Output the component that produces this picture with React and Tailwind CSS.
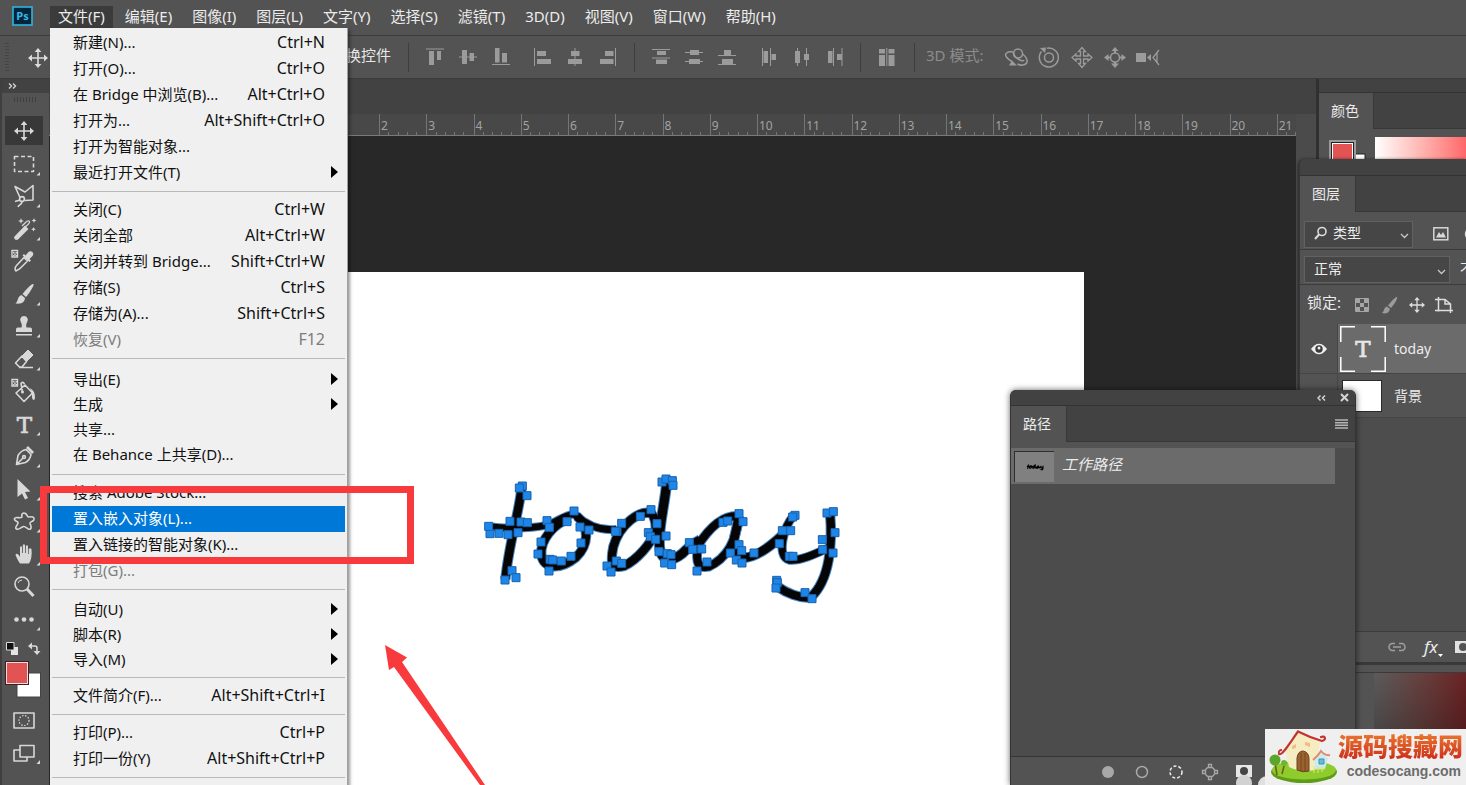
const menus = ['文件(F)', '编辑(E)', '图像(I)', '图层(L)', '文字(Y)', '选择(S)', '滤镜(T)', '3D(D)', '视图(V)', '窗口(W)', '帮助(H)'];

const fileMenu = [
  {
    row: 'h-[26px]',
    pad: '',
    items: [
      { label: '新建(N)...', keys: 'Ctrl+N' },
      { label: '打开(O)...', keys: 'Ctrl+O' },
      { label: '在 Bridge 中浏览(B)...', keys: 'Alt+Ctrl+O' },
      { label: '打开为...', keys: 'Alt+Shift+Ctrl+O' },
      { label: '打开为智能对象...' },
      { label: '最近打开文件(T)', sub: true },
    ],
  },
  {
    row: 'h-[26px]',
    pad: '',
    items: [
      { label: '关闭(C)', keys: 'Ctrl+W' },
      { label: '关闭全部', keys: 'Alt+Ctrl+W' },
      { label: '关闭并转到 Bridge...', keys: 'Shift+Ctrl+W' },
      { label: '存储(S)', keys: 'Ctrl+S' },
      { label: '存储为(A)...', keys: 'Shift+Ctrl+S' },
      { label: '恢复(V)', keys: 'F12', disabled: true },
    ],
  },
  {
    row: 'h-[25px]',
    pad: 'pt-[3px] pb-0.5',
    items: [
      { label: '导出(E)', sub: true },
      { label: '生成', sub: true },
      { label: '共享...' },
      { label: '在 Behance 上共享(D)...' },
    ],
  },
  {
    row: 'h-[26px]',
    pad: '',
    items: [
      { label: '搜索 Adobe Stock...' },
      { label: '置入嵌入对象(L)...', active: true },
      { label: '置入链接的智能对象(K)...' },
      { label: '打包(G)...', disabled: true },
    ],
  },
  {
    row: 'h-[25px]',
    pad: 'pt-0.5',
    items: [
      { label: '自动(U)', sub: true },
      { label: '脚本(R)', sub: true },
      { label: '导入(M)', sub: true },
    ],
  },
  { row: 'h-[26px]', pad: '', items: [{ label: '文件简介(F)...', keys: 'Alt+Shift+Ctrl+I' }] },
  {
    row: 'h-[26px]',
    pad: '',
    items: [
      { label: '打印(P)...', keys: 'Ctrl+P' },
      { label: '打印一份(Y)', keys: 'Alt+Shift+Ctrl+P' },
    ],
  },
];

function MenuItem({ item, row }) {
  const tone = item.active ? 'bg-[#0078d7] text-white' : item.disabled ? 'text-[#7c7c7c]' : 'text-[#111111]';
  return (
    <button type="button" role="menuitem" disabled={item.disabled} className={`flex w-full items-center pb-0.5 pl-[21px] pr-[7px] text-left ${row} ${tone}`}>
      <span className="flex-1 whitespace-nowrap">{item.label}</span>
      <span className="whitespace-nowrap text-[16px]">{item.keys}</span>
      <svg className="ml-1.5 h-3 w-[7px]" viewBox="0 0 7 12">
        {item.sub && <path d="M0 0L7 6L0 12Z" fill="#000" />}
      </svg>
    </button>
  );
}

function FileMenu() {
  return (
    <div role="menu" className="absolute left-0 top-full z-30 h-[760px] w-[298px] border-r border-[#a0a0a0] bg-[#f0f0f0] px-0.5 pt-0.5 text-[15px] leading-5 shadow-[2px_2px_3px_rgba(0,0,0,0.4)]">
      {fileMenu.map((group, i) => (
        <div key={i}>
          <div className={group.pad}>
            {group.items.map((item) => (
              <MenuItem key={item.label} item={item} row={group.row} />
            ))}
          </div>
          <div className="my-[5px] h-px bg-[#b9b9b9]" />
        </div>
      ))}
    </div>
  );
}

function MoveShape({ x, y }) {
  return (
    <g transform={`translate(${x} ${y})`}>
      <path d="M-8 0H8M0 -8V8" stroke="currentColor" strokeWidth="1.6" fill="none" />
      <path d="M0 -10L3.4 -6H-3.4ZM0 10L3.4 6H-3.4ZM-10 0L-6 -3.4V3.4ZM10 0L6 -3.4V3.4Z" fill="currentColor" />
    </g>
  );
}

function Checker({ y }) {
  return (
    <g transform={`translate(0 ${y})`}>
      <path d="M12 1.500H17.500V8H12Z" fill="none" stroke="currentColor" strokeWidth="1.400" />
      <path d="M13 3h1.500v1.500H13zM15.500 3H17v1.500h-1.500zM14.200 4.700h1.500v1.500h-1.500zM13 6h1.500v1.200H13zM15.500 6H17v1.200h-1.500z" fill="currentColor" />
    </g>
  );
}

const line = { fill: 'none', stroke: 'currentColor', strokeWidth: 1.6, strokeLinejoin: 'round' };

// every tool is drawn on a 48x32 cell
const tools = [
  { name: '移动', active: true, art: <MoveShape x={24} y={16} /> },
  { name: '矩形选框', corner: true, art: <rect x="14.500" y="8.500" width="19" height="15" {...line} strokeDasharray="4 2.500" /> },
  {
    name: '多边形套索',
    corner: true,
    art: (
      <g {...line}>
        <path d="M20 17.500L15 6.500L25 12L33 5.500V20L25 20.500" />
        <circle cx="22" cy="19" r="2.400" />
        <path d="M20 20L15 21.500M22 21.500C22 25 19 24 18 27" />
      </g>
    ),
  },
  {
    name: '魔棒',
    corner: true,
    art: (
      <g fill="currentColor">
        <path d="M14.500 23.500L25 12.500L28.500 16L18 26.500C16 28 13 25.500 14.500 23.500Z" />
        <path d="M24.500 14.500L28 11.500Q30.500 9 29 8Q27.500 7.500 25.500 9.500L22 13" fill="none" stroke="currentColor" strokeWidth="1.300" />
        <path d="M21 5l.8 2.200 2.200.8-2.200.8-.8 2.200-.8-2.200-2.200-.8 2.200-.8zM34 5l.7 1.800 1.800.7-1.800.7-.7 1.800-.7-1.800-1.800-.7 1.800-.7zM33.500 14l.7 1.600 1.600.7-1.600.7-.7 1.600-.7-1.600-1.600-.7 1.600-.7z" />
      </g>
    ),
  },
  {
    name: '吸管',
    art: (
      <g>
        <Checker y={4} />
        <path d="M16 26C14.500 25 15 22 16.500 20.500L24 12.500L27.500 16L20 23.500C18.500 25 17.500 24.500 16 26Z" {...line} />
        <path d="M22.500 10.500L24 9L25.500 10.500L28.500 7C31 4.500 35 8 32.500 11L29.500 14L31 15.500L29.500 17Z" fill="currentColor" />
      </g>
    ),
  },
  {
    name: '画笔',
    corner: true,
    art: <path d="M33.500 6C34.500 7.500 28 17 26 19L22.500 16C24.500 13.500 31.500 5 33.500 6ZM21.500 17L25 20C24.500 25.500 20 26 15.500 25.500C18.500 23.500 17 18.500 21.500 17Z" fill="currentColor" />,
  },
  {
    name: '仿制图章',
    corner: true,
    art: <path d="M24 6A4 4 0 0 1 27 12.500C26 14 26 16 26.500 17.500H30Q32 17.500 32 19.500V22H16V19.500Q16 17.500 18 17.500H21.500C22 16 22 14 21 12.500A4 4 0 0 1 24 6ZM16 24H32V25.500H16Z" fill="currentColor" />,
  },
  {
    name: '橡皮擦',
    corner: true,
    art: (
      <g>
        <path d="M22 13L28 7L33 12L26.500 18.500Z" fill="currentColor" stroke="currentColor" />
        <path d="M22 13L15.500 20L19.500 24H22L26.500 18.500ZM19 24.500H33" {...line} />
      </g>
    ),
  },
  {
    name: '油漆桶',
    art: (
      <g>
        <Checker y={3} />
        <path d="M16 18L25 10L32.500 18L24 26.500ZM22.500 17L21 8.500Q22.500 6 24.500 9" {...line} />
        <circle cx="22.500" cy="17" r="1.500" fill="currentColor" />
        <path d="M30 13Q35 16 35 22Q35 25 33.500 25Q32 24.500 32 22Q32.500 17 30 13Z" fill="currentColor" />
      </g>
    ),
  },
  {
    name: '文字',
    corner: true,
    art: (
      <text x="24.500" y="24.500" textAnchor="middle" fontFamily="DejaVu Serif, serif" fontSize="23" fill="currentColor" stroke="currentColor" strokeWidth=".7">
        T
      </text>
    ),
  },
  {
    name: '钢笔',
    corner: true,
    art: (
      <g {...line}>
        <path d="M16.500 24.500L18 15.500Q21 10.500 26 9.500L31 14.500Q30 20 25.500 22.500ZM17 24L23 18" />
        <path d="M27 7L33 13" strokeWidth="2.800" />
        <circle cx="24" cy="17" r="1.400" />
      </g>
    ),
  },
  { name: '路径选择', corner: true, art: <path d="M17.500 6L30.500 18.500L25 19L28 25L25 26.500L22 20.500L17.500 24Z" fill="currentColor" /> },
  {
    name: '自定形状',
    corner: true,
    art: <path d="M22 12C21 9 23 7 25.500 8.500C27.500 10 27 12 29 12C32 11.500 34.500 11.500 34 14.500C33.500 17 29.500 16 30 18.500C31 21 32 22.500 30.500 24C28 25.500 26 21 23.500 21.500C21 22 19 25.500 16.500 24C14 22.500 18.500 19.500 18 17.500C17.500 16 14 16.500 14.500 13.500C15.500 11 20 14 22 12Z" {...line} />,
  },
  {
    name: '抓手',
    corner: true,
    art: <path d="M20 25.500C18 22.500 16 19 15.500 16.500C16.500 15 18.500 16 20 19V9Q21 7.500 22 9V15H22.800V7Q24 5.500 25 7V15H25.800V8Q27 6.500 28 8V16H28.700V11Q30 9.500 31.500 11C32 17 31.500 22 29 25.500Z" fill="currentColor" />,
  },
  {
    name: '缩放',
    art: (
      <g {...line}>
        <circle cx="22" cy="14" r="7" />
        <path d="M27 19L33.500 26" strokeWidth="3" />
        <path d="M18 13Q19 10 22 10" strokeWidth="1" />
      </g>
    ),
  },
  {
    name: '编辑工具栏',
    corner: true,
    art: (
      <g fill="currentColor">
        <circle cx="16.500" cy="16.500" r="2.300" />
        <circle cx="24" cy="16.500" r="2.300" />
        <circle cx="31.500" cy="16.500" r="2.300" />
      </g>
    ),
  },
];

function Toolbox() {
  return (
    <aside className="flex w-[49px] shrink-0 flex-col border-l-2 border-[#3f3f3f] bg-[#535353] text-[#d8d8d8]">
      <div className="flex h-3.5 items-center bg-[#424242] pl-1.5">
        <svg width="10" height="8" viewBox="0 0 10 8" fill="none" stroke="#d0d0d0" strokeWidth="1.400">
          <path d="M1 1.500L3.500 4L1 6.500M5 1.500L7.500 4L5 6.500" />
        </svg>
      </div>
      <div className="mx-auto mt-1 h-[5px] w-6 bg-[repeating-linear-gradient(90deg,#404040_0_1px,transparent_1px_3px)]" />
      <div className="-ml-0.5 mt-[13px] flex h-[520px] flex-col">
        {tools.map((tool) => (
          <button key={tool.name} type="button" aria-label={tool.name} className="min-h-0 flex-1">
            <svg width="48" height="32" viewBox="0 0 48 32">
              {tool.active && <rect x="5" y="1" width="38" height="29" fill="#383838" />}
              {tool.art}
              {tool.corner && <path d="M40 24V27.500H36.500Z" fill="currentColor" />}
            </svg>
          </button>
        ))}
      </div>
      <svg className="-ml-0.5" width="48" height="136" viewBox="0 635 48 136">
        <path d="M11 647H18V655H11Z" fill="#e4e4e4" />
        <path d="M6.500 642.500H14V650H6.500Z" fill="#111" stroke="#ddd" />
        <path d="M30 646H35Q37 646 37 648V653" {...line} />
        <path d="M32 642.500V649.500L28 646ZM33.500 651H40.500L37 655Z" fill="currentColor" />
        <rect x="17" y="673" width="23.500" height="24" fill="#fff" stroke="#444" />
        <rect x="5" y="661" width="24" height="24" fill="#3d2020" />
        <rect x="6.500" y="662.500" width="21" height="21" fill="#e25354" stroke="#f5dcdc" />
        <path d="M14 713H34V728H14Z" {...line} />
        <circle cx="24" cy="720.500" r="5" {...line} strokeWidth="1.200" strokeDasharray="1.500 1.500" />
        <path d="M20 745.500H34V757H20ZM20 750H14V761H27V757" {...line} />
        <path d="M40 760V764H36.500Z" fill="currentColor" />
      </svg>
    </aside>
  );
}

const alignIcons = [
  [
    { name: '顶对齐', d: 'M3 3.500H21V4.500H3ZM6 6H11V20H6ZM14 6H18V15H14Z' },
    { name: '垂直居中对齐', d: 'M3 11.500H21V12.500H3ZM6 5H11V19H6ZM13.500 8H18V16H13.500Z' },
    { name: '底对齐', d: 'M3 19H21V20H3ZM6 3H10.500V17.500H6ZM13 8H18V17.500H13Z' },
  ],
  [
    { name: '左对齐', d: 'M4 3H5V21H4ZM7 6H16V11H7ZM7 14H21V19H7Z' },
    { name: '水平居中对齐', d: 'M11.500 3H12.500V21H11.500ZM8 6H16.500V11H8ZM5 14H19V19H5Z' },
    { name: '右对齐', d: 'M19 3H20V21H19ZM9 6H17.500V11H9ZM4 14H17.500V19H4Z' },
  ],
];

const distributeIcons = [
  [
    { name: '按顶分布', d: 'M3 4H21V5H3ZM8 6H17V10H8ZM3 12.500H21V13.500H3ZM7 14.500H18V19H7Z' },
    { name: '垂直居中分布', d: 'M3 7H21V8H3ZM8 5H17V10H8ZM3 16H21V17H3ZM7 14H18V19H7Z' },
    { name: '按底分布', d: 'M3 10H21V11H3ZM9 5H16V10H9ZM3 19H21V20H3ZM7 14H18V19H7Z' },
  ],
  [
    { name: '按左分布', d: 'M5 3H6V21H5ZM6.500 6H11V18H6.500ZM13 3H14V21H13ZM14.500 9H19V15H14.500Z' },
    { name: '水平居中分布', d: 'M7 3H8V21H7ZM5 6H10V18H5ZM16 3H17V21H16ZM14 9H19V15H14Z' },
    { name: '按右分布', d: 'M10 3H11V21H10ZM5 6H9.500V18H5ZM18.500 3H19.500V21H18.500ZM14 9H18.500V15H14Z' },
  ],
];

function BarIcon({ name, d, children }) {
  return (
    <button type="button" aria-label={name} className="flex w-[33px] justify-center">
      <svg width="24" height="24" viewBox="0 0 24 24" fill="currentColor">
        {d && <path d={d} />}
        {children}
      </svg>
    </button>
  );
}

function Divider() {
  return <div className="h-[29px] w-px bg-[#3e3e3e]" />;
}

function OptionsBar() {
  return (
    <div className="flex h-11 shrink-0 items-center border-b border-[#3a3a3a] border-t border-t-[#3c3c3c] bg-[#535353] text-[#9b9b9b]">
      <div className="flex w-[391px] shrink-0 items-center pl-[5px]">
        <div className="h-7 w-1 bg-[repeating-linear-gradient(#454545_0_1px,transparent_1px_3px)]" />
        <svg className="ml-4 text-[#dcdcdc]" width="24" height="24" viewBox="0 0 24 24">
          <MoveShape x={13} y={13} />
        </svg>
        <span className="ml-auto pb-1 text-[15px] leading-5 text-[#e6e6e6]">换控件</span>
      </div>
      <div className="ml-[17px] mr-[9px]">
        <Divider />
      </div>
      <div className="flex gap-2">
        {alignIcons.map((group, i) => (
          <div key={i} className="flex">
            {group.map((icon) => (
              <BarIcon key={icon.name} {...icon} />
            ))}
          </div>
        ))}
      </div>
      <div className="ml-2.5 mr-[9px]">
        <Divider />
      </div>
      <div className="flex gap-[9px]">
        {distributeIcons.map((group, i) => (
          <div key={i} className="flex">
            {group.map((icon) => (
              <BarIcon key={icon.name} {...icon} />
            ))}
          </div>
        ))}
      </div>
      <div className="mx-[9px]">
        <Divider />
      </div>
      <BarIcon name="自动对齐" d="M4 4H10V8.500H4ZM13.500 4H19.500V8.500H13.500ZM4 10H10V21H4ZM13.500 10H19.500V21H13.500ZM11.300 3H12.300V21H11.300Z" />
      <div className="mx-[11px]">
        <Divider />
      </div>
      <span className="w-[73px] whitespace-nowrap pb-1 text-[15px] leading-5 text-[#8c8c8c]">3D 模式:</span>
      <BarIcon name="环绕移动 3D 相机">
        <g fill="none" stroke="currentColor" strokeWidth="1.500">
          <path d="M9 7C3 6 0 9 2.500 12Q4.500 15 8 16.500M9.500 7Q9.500 11 14 14Q19 17 20 15M18.500 9C24 13 25 19 19 20Q16 20.500 13.500 19" />
          <circle cx="14" cy="8.500" r="4.500" />
        </g>
        <path d="M5 20.500L8 15.500L13 20.500Z" />
      </BarIcon>
      <BarIcon name="滚动 3D 相机">
        <g fill="none" stroke="currentColor" strokeWidth="1.500">
          <path d="M4.500 6.500A9.500 9.500 0 1 0 10 3.200" />
          <circle cx="12" cy="12.500" r="4.500" />
        </g>
        <path d="M3 3L9 2.500L8 8Z" />
      </BarIcon>
      <BarIcon name="平移 3D 相机">
        <path d="M12 2.500L15.500 6.500H13.500V11H18V9L22 12.500L18 16V14H13.500V18.500H15.500L12 22.500L8.500 18.500H10.500V14H6V16L2 12.500L6 9V11H10.500V6.500H8.500Z" fill="none" stroke="currentColor" strokeWidth="1.300" />
      </BarIcon>
      <BarIcon name="滑动 3D 相机">
        <path d="M12 2L15.500 6H8.500ZM12 23L16 18.500H8ZM1 12.500L5.500 9V16ZM23 12.500L18.500 9V16Z" />
        <path d="M11 5h2v3h-2zM11 17h2v3h-2zM4 11.500h4v2H4zM16 11.500h4v2h-4z" />
        <circle cx="12" cy="12.500" r="4.500" fill="none" stroke="currentColor" strokeWidth="1.500" />
      </BarIcon>
      <BarIcon name="变焦 3D 相机">
        <path d="M0 8H10V17H0ZM11 12.500L15 9V16Z" />
        <path d="M23 5L17 12.500L23 20M21 8V17" fill="none" stroke="currentColor" strokeWidth="1.300" />
      </BarIcon>
    </div>
  );
}

const rulerMarks = Array.from({ length: 20 }, (_, i) => i + 2);

function Ruler() {
  return (
    <div className="flex h-[22px] overflow-hidden border-b border-[#7a7a7a] bg-[#484848] text-[12px] leading-4 text-[#a2a2a2]">
      <div className="ml-[330px] grid w-[945px] shrink-0 grid-cols-20">
        {rulerMarks.map((n) => (
          <div key={n} className="flex flex-col justify-between border-l border-[#757575]">
            <span className="h-[17px] pl-px pt-1">{n}</span>
            <div className="grid h-[3px] grid-cols-5">
              <i className="border-r border-[#757575]" />
              <i className="border-r border-[#757575]" />
              <i className="border-r border-[#757575]" />
              <i className="border-r border-[#757575]" />
            </div>
          </div>
        ))}
      </div>
    </div>
  );
}

const strokes = [
  { d: 'M155 78C150 150 118 240 106 358', w: 25 },
  { d: 'M56 200C110 206 180 206 230 196C262 186 280 166 312 162', w: 20 },
  { d: 'M312 162C350 196 390 214 440 208', w: 20 },
  { d: 'M300 174C250 192 210 240 214 285C222 328 270 330 318 292C356 256 360 200 320 168', w: 25 },
  { d: 'M544 160C510 150 450 190 430 260C418 320 430 326 462 318C500 300 545 250 556 214C560 190 552 168 544 160', w: 25 },
  { d: 'M590 68C584 140 560 220 570 270C582 314 620 300 650 268Q668 250 690 240', w: 27 },
  { d: 'M806 168C760 164 720 200 684 256C676 310 684 326 716 320C770 296 800 240 806 168', w: 24 },
  { d: 'M806 168C802 220 770 270 812 292C850 300 900 260 935 228', w: 26 },
  { d: 'M972 166C940 200 918 290 958 300C990 304 1040 280 1070 266', w: 22 },
  { d: 'M1080 158C1088 250 1080 360 1022 412C990 416 950 400 920 378', w: 25 },
];

const anchors = [
  [157, 78], [148, 84], [171, 107], [120, 184], [153, 186], [172, 188], [144, 218], [114, 224], [87, 220], [60, 221], [56, 199],
  [126, 332], [138, 353], [105, 360], [231, 182], [238, 202], [291, 185], [312, 153], [330, 201], [357, 210], [213, 246], [204, 282],
  [240, 298], [248, 300], [274, 303], [303, 289], [333, 249], [237, 333], [455, 190], [441, 214], [436, 214], [511, 169], [543, 149],
  [439, 303], [411, 318], [455, 310], [423, 336], [576, 66], [588, 57], [607, 62], [609, 76], [561, 191], [535, 218], [541, 230],
  [557, 238], [588, 228], [567, 275], [584, 309], [592, 281], [603, 284], [605, 314], [658, 248], [668, 268], [695, 267], [711, 306],
  [681, 333], [759, 187], [773, 183], [807, 161], [819, 185], [807, 254], [781, 279], [815, 272], [799, 300], [816, 309], [852, 279],
  [975, 166], [968, 171], [937, 212], [962, 212], [928, 251], [958, 289], [969, 289], [1071, 159], [1090, 155], [1095, 218], [1057, 239],
  [1058, 269], [1089, 279], [920, 361], [922, 368], [918, 384], [1005, 398], [1026, 416],
];

function Lettering() {
  return (
    <svg role="img" aria-label="today" width="380" height="160" viewBox="0 0 1140 480" fill="none" strokeLinejoin="round">
      {strokes.map((s) => (
        <path key={s.d} d={s.d} stroke="#4a86c2" strokeWidth={s.w + 6} />
      ))}
      {strokes.map((s) => (
        <path key={s.d} d={s.d} stroke="#050505" strokeWidth={s.w} />
      ))}
      {anchors.map(([x, y]) => (
        <rect key={`${x}-${y}`} x={x - 12} y={y - 12} width="24" height="24" fill="#1e86e8" stroke="#1a63ac" strokeWidth="3" />
      ))}
    </svg>
  );
}

function Workspace() {
  return (
    <main className="flex min-w-0 flex-1 flex-col bg-[#4b4b4b]">
      <div className="h-[35px] shrink-0 bg-[#424242]" />
      <div className="flex min-h-0 flex-1">
        <div className="flex min-w-0 flex-1 flex-col">
          <Ruler />
          <div className="flex min-h-0 flex-1 bg-[#282828] pt-[136px] pl-[186px] pr-[212px]">
            <div className="flex flex-1 justify-center bg-white pt-[188px]">
              <Lettering />
            </div>
          </div>
        </div>
        <div className="w-5 shrink-0" />
      </div>
    </main>
  );
}

function PanelTab({ children, width, extra }) {
  return (
    <div className="flex h-9 shrink-0 bg-[#424242]">
      <div className={`flex items-center bg-[#535353] pl-3 text-[14px] leading-5 text-[#ececec] ${width}`}>{children}</div>
      <div className="flex flex-1 items-center justify-end border-b border-l border-[#383838]">{extra}</div>
    </div>
  );
}

function ColorPanel() {
  return (
    <aside className="flex w-[150px] shrink-0 flex-col border-l-3 border-[#303030] bg-[#535353]">
      <div className="h-3.5 shrink-0 border-b border-[#333333] bg-[#424242]" />
      <PanelTab width="w-[54px]">颜色</PanelTab>
      <div className="flex pt-2">
        <svg className="ml-2.5 mt-[3px] w-[46px] shrink-0" height="30" viewBox="0 0 46 30">
          <rect x="14" y="14" width="22" height="16" fill="#fff" stroke="#222" />
          <rect width="27" height="30" fill="#9b9b9b" />
          <rect x="2.500" y="2.500" width="22" height="28" fill="#e25354" stroke="#222" />
          <rect x="3.500" y="3.500" width="20" height="26" fill="none" stroke="#fff" />
        </svg>
        <div className="h-8 flex-1 bg-linear-to-r from-white to-[#ff6669]" />
      </div>
    </aside>
  );
}

function Select({ label, options, width, icon }) {
  return (
    <label className={`relative block h-[27px] shrink-0 ${width}`}>
      <span className="sr-only">{label}</span>
      <select className={`h-full w-full appearance-none border border-[#616161] bg-[#464646] pb-0.5 text-[14px] leading-5 text-[#ededed] ${icon ? 'pl-7' : 'pl-[9px]'}`}>
        {options.map((o) => (
          <option key={o}>{o}</option>
        ))}
      </select>
      {icon}
      <svg className="absolute bottom-2 right-1" width="9" height="6" viewBox="0 0 9 6" fill="none" stroke="#c8c8c8" strokeWidth="1.300">
        <path d="M1 1L4.500 4.500L8 1" />
      </svg>
    </label>
  );
}

function LayersPanel() {
  return (
    <section className="absolute right-0 top-20 z-10 flex h-full w-[167px] flex-col overflow-hidden rounded-tl-md border-l border-[#383838] bg-[#4d4d4d] text-[#ececec] shadow-[-1px_0_3px_rgba(0,0,0,0.5)]">
      <div className="h-[17px] shrink-0 border-b border-[#333333] bg-[#424242]" />
      <PanelTab width="w-[55px]">图层</PanelTab>
      <div className="flex h-[38px] shrink-0 items-center border-b border-[#3c3c3c] bg-[#535353] pl-1 pt-1.5">
        <Select
          label="滤镜类型"
          options={['类型']}
          width="w-[109px]"
          icon={
            <svg className="absolute left-2.5 top-1.5" width="14" height="14" viewBox="0 0 14 14" fill="none" stroke="#dcdcdc" strokeWidth="1.600">
              <circle cx="8" cy="5.500" r="4" />
              <path d="M5 8.500L1 13" strokeWidth="2" />
            </svg>
          }
        />
        <svg className="ml-5 shrink-0" width="32" height="16" viewBox="0 0 32 16">
          <rect x=".8" y="1.800" width="14" height="12" fill="none" stroke="#d8d8d8" strokeWidth="1.500" />
          <path d="M3 11.500L6 6L8 9L10 6L13 11.500Z" fill="#d8d8d8" />
        </svg>
        <svg className="-ml-px shrink-0" width="14" height="14" viewBox="0 0 14 14" fill="none" stroke="#d8d8d8" strokeWidth="1.500">
          <circle cx="7" cy="7" r="5.500" />
        </svg>
      </div>
      <div className="flex h-[35px] shrink-0 items-center border-b border-[#3c3c3c] bg-[#535353] pl-1 pt-1">
        <Select label="混合模式" options={['正常']} width="w-[146px]" />
        <span className="ml-2.5 whitespace-nowrap text-[14px] leading-5">不</span>
      </div>
      <div className="flex h-[39px] shrink-0 items-center bg-[#535353] pl-[7px]">
        <span className="w-12 pb-1.5 text-[15px] leading-5">锁定:</span>
        <svg width="98" height="20" viewBox="0 0 98 20" className="shrink-0 text-[#dedede]">
          <path d="M.5 3.500h13v13H.5z" fill="none" stroke="#a5a5a5" />
          <path d="M1 4h4v4H1zM9 4h4v4H9zM5 8h4v4H5zM1 12h4v4H1zM9 12h4v4H9z" fill="#a5a5a5" />
          <path d="M42 2C43.500 3 38 11 36 13L33 10.500C35 8 40.500 1.500 42 2ZM32 11.500L35 14C34 18.500 30 19 27 18C29.500 16.500 28.500 12.500 32 11.500Z" fill="#9b9b9b" />
          <g transform="translate(62 10) scale(.8)">
            <MoveShape x={0} y={0} />
          </g>
          <path d="M83.500 2V16.500M80 4.500H90L95.500 9V18M80 15.500H98M90 4.500V9H95.500" fill="none" stroke="currentColor" strokeWidth="1.500" />
        </svg>
      </div>
      <div className="flex h-[50px] shrink-0 border-b border-[#454545] bg-[#535353]">
        <button type="button" aria-label="隐藏图层" className="flex w-[38px] items-center justify-center border-r border-[#454545]">
          <svg width="16" height="12" viewBox="0 0 16 12">
            <path d="M0 6Q8 -4.500 16 6Q8 16.500 0 6Z" fill="#f0f0f0" />
            <circle cx="8" cy="6" r="3.700" fill="#3b3b3b" />
            <circle cx="8" cy="5" r="1.500" fill="#f0f0f0" />
          </svg>
        </button>
        <div className="flex flex-1 items-center bg-[#6b6b6b] pl-0.5 pt-px text-[14px] leading-5">
          <svg width="46" height="46" viewBox="0 0 46 46">
            <path d="M.8 16V.8H15M31 .8H45.200V16M45.200 31V45.200H31M15 45.200H.8V31" fill="none" stroke="#fff" strokeWidth="1.500" />
            <text x="23" y="31" textAnchor="middle" fontFamily="DejaVu Serif, serif" fontSize="23" fill="#e6e6e6" stroke="#e6e6e6" strokeWidth=".7">
              T
            </text>
          </svg>
          <span className="ml-2">today</span>
        </div>
      </div>
      <div className="flex h-11 shrink-0 border-b border-[#454545] bg-[#535353]">
        <div className="w-[38px] border-r border-[#454545]" />
        <div className="flex flex-1 items-center pl-1 text-[14px] leading-5">
          <div className="h-8 w-10 border border-[#2b2b2b] bg-white" />
          <span className="ml-3">背景</span>
        </div>
      </div>
      <div className="h-[213px] shrink-0" />
      <div className="flex h-[34px] shrink-0 items-center border-b-3 border-t border-b-[#393939] border-t-[#3c3c3c] bg-[#535353] pl-[88px]">
        <svg className="shrink-0" width="18" height="10" viewBox="0 0 18 10" fill="none" stroke="#a0a0a0" strokeWidth="1.500">
          <path d="M7 1.500H4.500A3.500 3.500 0 0 0 4.500 8.500H7M11 1.500H13.500A3.500 3.500 0 0 1 13.500 8.500H11M5 5H13" />
        </svg>
        <span className="ml-[18px] text-[17px] italic leading-5">fx</span>
        <svg className="mt-4 shrink-0" width="5" height="3" viewBox="0 0 5 3">
          <path d="M0 0H5L2.500 3Z" fill="#fff" />
        </svg>
        <svg className="ml-3 shrink-0" width="16" height="14" viewBox="0 0 16 14">
          <path d="M0 1H16V13H0Z" fill="#e2e2e2" />
          <circle cx="8" cy="7" r="4" fill="#535353" />
        </svg>
      </div>
      <div className="h-2 shrink-0 border-b border-[#3a3a3a] bg-[#535353]" />
      <div className="flex flex-1 bg-[#535353] pl-[74px]">
        <div className="h-[130px] flex-1 bg-linear-to-r from-[#5b5b5b] to-[#6a2224]">
          <div className="h-full bg-linear-to-b from-transparent to-black/50" />
        </div>
      </div>
    </section>
  );
}

function PathsPanel() {
  return (
    <section className="absolute bottom-0 right-[110px] top-[311px] z-20 flex w-[346px] flex-col overflow-hidden rounded-t-md border-x border-[#343434] bg-[#4c4c4c] text-[#ececec] shadow-[0_0_6px_rgba(0,0,0,0.6)]">
      <div className="flex h-4 shrink-0 items-center justify-end gap-3.5 border-b border-[#333333] bg-[#424242] pr-1.5 text-[#d4d4d4]">
        <svg width="9" height="6" viewBox="0 0 9 6" fill="none" stroke="currentColor" strokeWidth="1.500">
          <path d="M3.500 .5L1 3L3.500 5.500M8 .5L5.500 3L8 5.500" />
        </svg>
        <button type="button" aria-label="关闭">
          <svg width="9" height="9" viewBox="0 0 9 9" fill="none" stroke="currentColor" strokeWidth="2">
            <path d="M1 1L8 8M8 1L1 8" />
          </svg>
        </button>
      </div>
      <PanelTab
        width="w-[55px]"
        extra={
          <button type="button" aria-label="面板菜单" className="mr-[7px]">
            <svg width="13" height="10" viewBox="0 0 13 10" stroke="#b4b4b4" strokeWidth="1.400">
              <path d="M0 1H13M0 3.700H13M0 6.300H13M0 9H13" />
            </svg>
          </button>
        }
      >
        路径
      </PanelTab>
      <div className="h-1.5 shrink-0 bg-[#535353]" />
      <div className="mr-5 flex h-9 shrink-0 items-center bg-[#6b6b6b] pl-[3px]">
        <div className="flex h-[31px] w-10 items-center justify-center border-l border-t border-[#2e2e2e] bg-[#808080]">
          <svg width="18" height="8" viewBox="0 0 1140 480" fill="none" stroke="#000" strokeWidth="75">
            {strokes.map((s) => (
              <path key={s.d} d={s.d} />
            ))}
          </svg>
        </div>
        <span className="ml-2 pb-1 text-[15px] italic leading-5">工作路径</span>
      </div>
      <div className="flex-1" />
      <div className="flex h-[29px] shrink-0 items-center gap-5 border-t border-[#363636] bg-[#535353] pl-[90px] pt-0.5 text-[#a8a8a8]">
        <svg width="14" height="14" viewBox="0 0 14 14" fill="currentColor">
          <circle cx="7" cy="7" r="6" />
        </svg>
        <svg width="14" height="14" viewBox="0 0 14 14" fill="none" stroke="currentColor" strokeWidth="1.500">
          <circle cx="7" cy="7" r="5.500" />
        </svg>
        <svg width="14" height="14" viewBox="0 0 14 14" fill="none" stroke="#ececec" strokeWidth="1.500">
          <circle cx="7" cy="7" r="6" strokeDasharray="3 2" />
        </svg>
        <svg width="14" height="14" viewBox="0 0 14 14" fill="none" stroke="currentColor" strokeWidth="1.300" overflow="visible">
          <circle cx="7" cy="7" r="5" />
          <path d="M5.500 -.5h3v3h-3zM5.500 11.500h3v3h-3zM-.5 5.500h3v3h-3zM11.500 5.500h3v3h-3z" fill="#535353" />
        </svg>
        <svg width="50" height="20" viewBox="0 0 50 20" className="-ml-px mt-1 shrink-0" overflow="visible">
          <path d="M0 1H16V13H0Z" fill="#e6e6e6" />
          <circle cx="8" cy="7" r="4" fill="#444" />
          <circle cx="8" cy="19" r="8" fill="#d2d2d2" />
          <circle cx="31" cy="21" r="9" fill="#e0e0e0" />
        </svg>
      </div>
    </section>
  );
}

function SiteLogo() {
  return (
    <a href="#codesocang" className="absolute bottom-0 right-0 z-40 flex h-14 w-[201px] bg-[#f0efef]">
      <svg className="shrink-0" width="73" height="56" viewBox="0 0 73 56">
        <ellipse cx="39" cy="43" rx="33" ry="11" fill="#5e9c18" />
        <ellipse cx="39" cy="41" rx="32" ry="9.500" fill="#8ecb2c" />
        <path d="M20 19L33 4L55 12L50 41Q36 44 24 38Z" fill="#f6ecc2" />
        <path d="M49 30L56 24L63 29L60 40L50 40Z" fill="#cdeaf0" />
        <path d="M14 25C17 27 24 15 33 2.500C42 7 50 10 57 12C62 11 60 6 56 8" fill="none" stroke="#c3342f" strokeWidth="2.200" strokeLinecap="round" />
        <path d="M14 25Q13 21 17 21" fill="none" stroke="#c3342f" strokeWidth="1.800" />
        <path d="M48 31Q53 27 56 22Q60 27 65 26" fill="none" stroke="#e08a6c" strokeWidth="2" />
        <path d="M32 41V29Q33 22 38 22Q44 23 44 30V42Q38 44 32 41Z" fill="#9a6230" stroke="#6f431c" />
        <path d="M36 24V42M40 24V42" stroke="#6f431c" strokeWidth=".8" />
        <path d="M27 17l4-2v4l-4 1zM40 13l5 1v4l-5-2z" fill="#f2b98a" />
        <path d="M54 30h5v5h-5z" fill="#66bcd0" stroke="#3d95ad" />
        <path d="M10 34L12 46M19 37L17 45" stroke="#7b5a22" strokeWidth="1.600" />
        <circle cx="10" cy="31" r="5.500" fill="#5aa52a" />
        <circle cx="19" cy="34" r="3" fill="#6fb535" />
        <path d="M49 37v7M53 37v7M57 37v6M49 40h11" stroke="#d6e97a" strokeWidth="1" />
      </svg>
      <span className="flex flex-col items-end">
        <span className="bg-linear-to-b from-[#f08030] to-[#c81818] bg-clip-text text-[25px] font-black leading-[34px] text-transparent">源码搜藏网</span>
        <span className="pr-0.5 font-['Liberation_Sans',sans-serif] text-[14px] font-bold leading-4 text-[#6c6c6c]">codesocang.com</span>
      </span>
    </a>
  );
}

export default function App() {
  return (
    <div className="relative flex h-screen flex-col overflow-hidden bg-[#535353] font-['Noto_Sans','Noto_Sans_CJK_SC',sans-serif]">
      <header className="flex h-[35px] shrink-0 pt-1.5 text-[15px] leading-5 text-[#ececec]">
        <svg className="ml-3 mr-[17px]" width="21" height="20" viewBox="0 0 21 20">
          <rect x="1" y="1" width="19" height="18" fill="#04243a" stroke="#2fb4e0" strokeWidth="1.600" />
          <text x="10.500" y="14" textAnchor="middle" fontFamily="Open Sans, sans-serif" fontWeight="bold" fontSize="11" fill="#35b8ea">
            Ps
          </text>
        </svg>
        <nav className="flex gap-1">
          {menus.map((name, i) => (
            <div key={name} className="relative h-[22px]">
              <button type="button" className={`h-full whitespace-nowrap px-2 pb-0.5 ${i === 0 ? 'bg-[#3b3b3b]' : ''}`}>
                {name}
              </button>
              {i === 0 && <FileMenu />}
            </div>
          ))}
        </nav>
      </header>
      <OptionsBar />
      <div className="relative flex min-h-0 flex-1">
        <Toolbox />
        <Workspace />
        <ColorPanel />
        <LayersPanel />
        <PathsPanel />
      </div>

      <div className="pointer-events-none absolute left-10 top-[486px] z-40 h-[78px] w-[374px] border-7 border-[#f93a3d]" />
      <svg className="pointer-events-none absolute left-[380px] top-[640px] z-40" width="110" height="145" viewBox="0 0 110 145">
        <path d="M5 5L27 17.500L22 22L105 145H100L14 27L9 30Z" fill="#f93a3d" />
      </svg>
      <SiteLogo />
    </div>
  );
}
